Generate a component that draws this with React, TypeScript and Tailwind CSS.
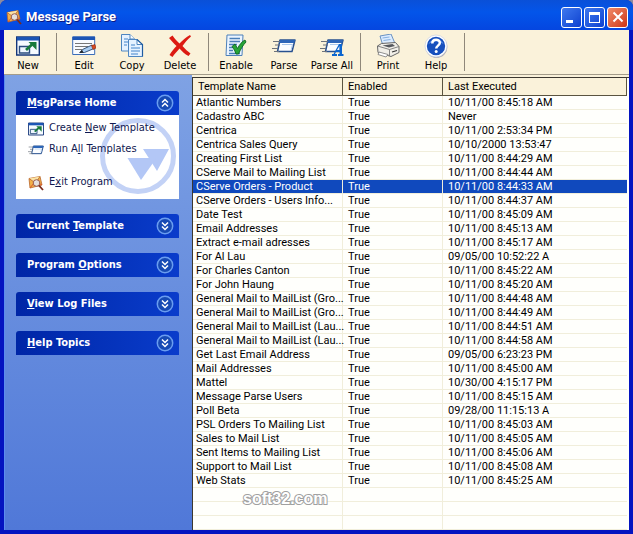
import { useState } from "react";
import type { ReactNode } from "react";

type Row = [name: string, executed: string];

const ROWS: Row[] = [
    ["Atlantic Numbers", "10/11/00 8:45:18 AM"],
    ["Cadastro ABC", "Never"],
    ["Centrica", "10/11/00 2:53:34 PM"],
    ["Centrica Sales Query", "10/10/2000 13:53:47"],
    ["Creating First List", "10/11/00 8:44:29 AM"],
    ["CServe Mail to Mailing List", "10/11/00 8:44:44 AM"],
    ["CServe Orders - Product", "10/11/00 8:44:33 AM"],
    ["CServe Orders - Users Info...", "10/11/00 8:44:37 AM"],
    ["Date Test", "10/11/00 8:45:09 AM"],
    ["Email Addresses", "10/11/00 8:45:13 AM"],
    ["Extract e-mail adresses", "10/11/00 8:45:17 AM"],
    ["For Al Lau", "09/05/00 10:52:22 A"],
    ["For Charles Canton", "10/11/00 8:45:22 AM"],
    ["For John Haung", "10/11/00 8:45:20 AM"],
    ["General Mail to MailList (Gro...", "10/11/00 8:44:48 AM"],
    ["General Mail to MailList (Gro...", "10/11/00 8:44:49 AM"],
    ["General Mail to MailList (Lau...", "10/11/00 8:44:51 AM"],
    ["General Mail to MailList (Lau...", "10/11/00 8:44:58 AM"],
    ["Get Last Email Address", "09/05/00 6:23:23 PM"],
    ["Mail Addresses", "10/11/00 8:45:00 AM"],
    ["Mattel", "10/30/00 4:15:17 PM"],
    ["Message Parse Users", "10/11/00 8:45:15 AM"],
    ["Poll Beta", "09/28/00 11:15:13 A"],
    ["PSL Orders To Mailing List", "10/11/00 8:45:03 AM"],
    ["Sales to Mail List", "10/11/00 8:45:05 AM"],
    ["Sent Items to Mailing List", "10/11/00 8:45:06 AM"],
    ["Support to Mail List", "10/11/00 8:45:08 AM"],
    ["Web Stats", "10/11/00 8:45:25 AM"],
];

const EMPTY_ROWS = [0, 1, 2];

function AppIcon({ className }: { className: string }) {
    return (
        <svg viewBox="0 0 16 16" className={className} aria-hidden="true">
            <path d="M1 3.500 12 1.500 14 10 2 13Z" fill="#f2b04a" stroke="#b8642a" strokeWidth=".8" />
            <path d="M1 3.500 7.500 8 12 1.500" fill="#fbe3a4" stroke="#b8642a" strokeWidth=".8" />
            <path d="M2 13 6 8M14 10 8.500 7" stroke="#d8572a" strokeWidth="1" />
            <circle cx="8.500" cy="8" r="3.300" fill="#e4ecf8" fillOpacity=".85" stroke="#9a5a50" />
            <path d="m11 10.500 4 4.500" stroke="#7a2a1a" strokeWidth="1.800" />
        </svg>
    );
}

function NewIcon({ className }: { className: string }) {
    return (
        <svg viewBox="0 0 24 20" className={className} aria-hidden="true">
            <path d="M.7 1h22.600v18H.7z" fill="#f6fbff" stroke="#15377a" strokeWidth="1.400" />
            <path d="M1 1h22v3.500H1z" fill="#1c55b5" />
            <path d="M3.500 10.500h10v6.500h-10z" fill="#eef6ff" stroke="#2a4c7e" strokeWidth="1.400" />
            <path d="m10 14 6-5.500" stroke="#177a3a" strokeWidth="2.800" />
            <path d="M12.500 6h8v8z" fill="#177a3a" />
        </svg>
    );
}

function EditIcon() {
    return (
        <svg viewBox="0 0 24 24" className="size-6" aria-hidden="true">
            <path d="M.7 3h22v17.500H.7z" fill="#f8fbff" stroke="#3a6db8" strokeWidth="1" />
            <path d="M.5 2.500h22.500V6H.5z" fill="#1c55b5" />
            <path d="M3 9.500h17M3 12.500h13M3 15.500h7" stroke="#777" strokeWidth="1" />
            <path d="m8 18.500 2.500-3L20 11l2 3.500-9.500 4Z" fill="#a9cdf2" stroke="#27466e" strokeWidth=".9" />
            <path d="m19.500 11.500 3.500-1 1 3.500-3 1.500Z" fill="#d84a20" stroke="#8a2810" strokeWidth=".6" />
            <path d="m7 19 3-3 1.500 2.500Z" fill="#222" />
        </svg>
    );
}

function CopyIcon() {
    return (
        <svg viewBox="0 0 24 24" className="size-6" aria-hidden="true">
            <g fill="#e6f2ff" stroke="#4f86c0" strokeWidth="1">
                <path d="M1.500.5H10l4.500 4.500v12h-13z" />
                <path d="M10 .5V5h4.500" fill="#fff" />
                <path d="M8.500 5.500h8.500l5.500 5v12h-14z" />
                <path d="M17 5.500v5h5.500" fill="#fff" />
            </g>
            <path d="M4 5h4M4 8h4M4 11h3M11 11h4M11 14h9M11 17h9M11 20h7" stroke="#79a9dd" strokeWidth="1.300" />
            <path d="m17 5.500 5.500 5v12" fill="none" stroke="#1e5ba0" strokeWidth="1.200" />
        </svg>
    );
}

function DeleteIcon() {
    return (
        <svg viewBox="0 0 24 24" className="size-6" aria-hidden="true">
            <path
                d="M1 4 4.500 1.500C7 5 9 7 11.500 9.500 15 6 18 3 22 1l1 1.500C19.500 5.500 17 8.500 14.500 12c3 3.500 5 5 8 7.500L20.500 22c-4-2-6-4.500-9-7.500C9 17.500 6.500 20 4.500 23L1.500 21C3.500 17.500 6 14.500 8.500 12 5.500 9 3.500 7 1 4Z"
                fill="#dc1a12"
            />
        </svg>
    );
}

function EnableIcon() {
    return (
        <svg viewBox="0 0 24 24" className="size-6" aria-hidden="true">
            <path d="M3 1h16l-1 20.500H2Z" fill="#eaf4ff" stroke="#4d80b9" strokeWidth="1" />
            <path d="M5.500 4.500H16M5.500 7.500H16M5 10.500h8M5 13.500h4M5 16.500h4M5 19.500h11" stroke="#4b7fb8" strokeWidth="1.500" />
            <path d="m8 12.500 3-2.500 2.500 4.500C15.500 10.500 18 7.500 21 6l1 2c-3 3-5.500 7.500-7.500 12h-2.500C11 17 10 15 8 12.500Z" fill="#27a537" stroke="#0a6420" strokeWidth=".9" />
        </svg>
    );
}

function ParseIcon({ className, all }: { className: string; all?: boolean }) {
    return (
        <svg viewBox="0 0 24 24" className={className} aria-hidden="true">
            <path d="M8 6h15l-3 11.500H5.500Z" fill="#fbfdff" stroke="#27508f" strokeWidth="1.500" strokeLinejoin="round" />
            <path d="M8 6h15l-.8 3H7.200Z" fill="#2d66b8" />
            <path d="M10 10.500h10.500l-1.300 5" fill="none" stroke="#aac8ec" strokeWidth="1" />
            <path d="M1 7.500h7M3 11h5M0 14.500h6M2 17.500h5" stroke="#6d737c" strokeWidth="1" />
            {all && (
                <path d="M12 22v-2h1.500L19 10h3v10h1.500v2H18v-2h1.500v-2h-3.500l-1 2H17v2Zm5-6h2.500v-4Z" fill="#0c66cf" />
            )}
        </svg>
    );
}

function PrintIcon() {
    return (
        <svg viewBox="0 0 24 24" className="size-6" aria-hidden="true">
            <path d="m4 2 11-2 4 9.500L7 12Z" fill="#dcecff" stroke="#5a87bc" strokeWidth=".9" />
            <path d="m6.500 4 7-1M7.500 6.500l7-1" stroke="#86b0e0" strokeWidth="1" />
            <path d="m1.500 12 4-2.500 14-1 3.500 4v6L15 22.500 2 18.500Z" fill="#f1efe8" stroke="#666" strokeWidth="1" />
            <path d="m1.500 12 12 3.500L23 12.500M13.500 15.500V22" fill="none" stroke="#777" strokeWidth=".9" />
            <path d="m6.500 11.500 10-1.500 2.500 2-6 1.500Z" fill="#55585e" />
            <path d="m3 18 9 2.500-2 2.500-8-2.500Z" fill="#fff" stroke="#777" strokeWidth=".8" />
            <path d="m16 18 5-1.500" stroke="#333" strokeWidth="1.300" />
        </svg>
    );
}

function HelpIcon() {
    return (
        <svg viewBox="0 0 24 24" className="size-6" aria-hidden="true">
            <circle cx="12.500" cy="13" r="10.800" fill="#a9a9b2" />
            <circle cx="12" cy="12" r="11" fill="#fff" stroke="#bfc6d8" strokeWidth=".6" />
            <circle cx="12" cy="12" r="9.200" fill="#1750bd" />
            <path d="M4.500 10a8 7 0 0 1 15 0 12 12 0 0 0-15 0Z" fill="#5c92ec" />
            <path d="M8.300 9.500C8.300 4.500 16 4.700 15.800 9c-.1 2.500-3.600 2.800-3.600 5.500" fill="none" stroke="#fff" strokeWidth="2.500" />
            <circle cx="12.200" cy="17.500" r="1.500" fill="#fff" />
        </svg>
    );
}

function Chevrons({ up }: { up?: boolean }) {
    return (
        <svg viewBox="0 0 18 18" className="size-[18px]" aria-hidden="true">
            <circle cx="9" cy="9" r="7.700" fill="#174ab4" stroke="#6a9df0" strokeWidth="1.500" />
            <path
                d={up ? "M6 8.500 9 5.500l3 3M6 12.500l3-3 3 3" : "m6 5.500 3 3 3-3M6 9.500l3 3 3-3"}
                fill="none"
                stroke="#fff"
                strokeWidth="1.500"
            />
        </svg>
    );
}

function ToolButton({ label, children }: { label: string; children: ReactNode }) {
    return (
        <button className="flex w-12 flex-col items-center gap-px whitespace-nowrap pt-1 text-[11px] leading-[14px]">
            <span className="flex h-6 shrink-0 items-center">{children}</span>
            {label}
        </button>
    );
}

function Separator() {
    return (
        <div className="flex w-2 justify-center py-[3px]">
            <div className="w-px bg-[#8f887a]" />
        </div>
    );
}

function PanelHeader({ children, up }: { children: ReactNode; up?: boolean }) {
    return (
        <button className="flex h-6 w-full items-center justify-between rounded-t-[3px] bg-linear-to-r from-[#0026a6] to-[#0a3ccb] pr-[5px] pl-[11px] text-[11px] font-bold text-white">
            <span>{children}</span>
            <Chevrons up={up} />
        </button>
    );
}

function PanelLink({ icon, children }: { icon: ReactNode; children: ReactNode }) {
    return (
        <a href="#" className="flex h-[21px] items-center gap-[5px] text-[11px] text-[#101850]">
            {icon}
            <span>{children}</span>
        </a>
    );
}

function Sidebar() {
    return (
        <aside className="flex w-[188px] shrink-0 flex-col gap-[15px] border-l border-[#5b8df0] bg-linear-to-b from-[#7fa2e4] to-[#5078d8] pt-4 pr-[13px] pl-[11px]">
            <section>
                <PanelHeader up>
                    <u>M</u>sgParse Home
                </PanelHeader>
                <div className="relative h-[84px] bg-white pt-[3px] pl-3">
                    <svg viewBox="0 0 78 78" className="absolute top-[2px] right-[2px] size-[78px]" aria-hidden="true">
                        <circle cx="39" cy="39" r="35.500" fill="none" stroke="#c3d2f6" strokeWidth="5" />
                        <path d="M44 32h26L58 54l-5-8Z" fill="#b3c7f6" />
                        <path d="M28.500 41h29L42 63Z" fill="#b3c7f6" />
                    </svg>
                    <nav className="relative flex flex-col">
                        <PanelLink icon={<NewIcon className="h-[14px] w-4" />}>
                            Create <u>N</u>ew Template
                        </PanelLink>
                        <PanelLink icon={<ParseIcon className="size-4" />}>
                            Run A<u>l</u>l Templates
                        </PanelLink>
                        <div className="h-3" />
                        <PanelLink icon={<AppIcon className="size-4" />}>
                            E<u>x</u>it Program
                        </PanelLink>
                    </nav>
                </div>
            </section>
            <PanelHeader>
                Current <u>T</u>emplate
            </PanelHeader>
            <PanelHeader>
                Program <u>O</u>ptions
            </PanelHeader>
            <PanelHeader>
                <u>V</u>iew Log Files
            </PanelHeader>
            <PanelHeader>
                <u>H</u>elp Topics
            </PanelHeader>
        </aside>
    );
}

function TemplateTable() {
    const [selected, setSelected] = useState(6);

    return (
        <div className="relative min-w-0 flex-1 border-t border-l border-[#3c3830] bg-[#fffffc] pr-[2px]">
            <table className="w-full table-fixed border-separate border-spacing-0 text-left font-['Roboto',sans-serif] text-[11px] leading-[13px]">
                <colgroup>
                    <col className="w-[150px]" />
                    <col className="w-[100px]" />
                    <col />
                </colgroup>
                <thead>
                    <tr className="h-[18px] bg-[#faf2da]">
                        {["Template Name", "Enabled", "Last Executed"].map((h) => (
                            <th
                                key={h}
                                className="border-r border-b border-[#5a5440] py-0 pl-[5px] font-normal"
                            >
                                {h}
                            </th>
                        ))}
                    </tr>
                </thead>
                <tbody>
                    {ROWS.map(([name, executed], i) => (
                        <tr
                            key={i}
                            onClick={() => setSelected(i)}
                            className={i === selected ? "h-[14px] bg-[#1049bd] text-white" : "h-[14px]"}
                        >
                            <td className="border-r border-b border-[#f1eedb] py-0 pl-[3px] whitespace-nowrap">
                                {name}
                            </td>
                            <td className="border-r border-b border-[#f1eedb] py-0 pl-[5px]">True</td>
                            <td className="border-b border-[#f1eedb] py-0 pl-[5px] whitespace-nowrap">{executed}</td>
                        </tr>
                    ))}
                    {EMPTY_ROWS.map((i) => (
                        <tr key={`empty-${i}`} className="h-[14px]">
                            <td className="border-r border-b border-[#f1eedb] p-0" />
                            <td className="border-r border-b border-[#f1eedb] p-0" />
                            <td className="border-b border-[#f1eedb] p-0" />
                        </tr>
                    ))}
                </tbody>
            </table>
            <span className="absolute bottom-[21px] left-[50px] font-['Liberation_Sans',sans-serif] text-[16px] leading-5 font-bold text-white [-webkit-text-stroke:2px_#a0a0a0] [paint-order:stroke_fill]">
                soft32.com
            </span>
        </div>
    );
}

export default function App() {
    return (
        <div className="h-screen overflow-hidden bg-[#8b8ba0] font-['DejaVu_Sans_Condensed','DejaVu_Sans',sans-serif] text-black">
            <div className="flex h-full flex-col rounded-t-[7px] bg-[#0414c0]">
                <header className="flex h-[30px] shrink-0 items-center rounded-t-[7px] bg-linear-to-b from-[#0a50d8] via-[#0355ea] via-40% to-[#0546e0] pt-1 pr-[5px] pl-[6px]">
                    <AppIcon className="size-4" />
                    <h1 className="ml-1 flex-1 font-['Roboto',sans-serif] text-[13px] font-bold text-white [text-shadow:1px_1px_0_#0a1883]">
                        Message Parse
                    </h1>
                    <div className="flex gap-[2px]">
                        <button
                            aria-label="Minimize"
                            className="flex size-[21px] items-end rounded-[3px] border border-white bg-linear-to-br from-[#3f78ee] to-[#0f3fd0] pb-1 pl-1"
                        >
                            <span className="h-[3px] w-[7px] bg-white" />
                        </button>
                        <button
                            aria-label="Maximize"
                            className="flex size-[21px] items-center justify-center rounded-[3px] border border-white bg-linear-to-br from-[#3f78ee] to-[#0f3fd0]"
                        >
                            <span className="size-[11px] border border-t-[3px] border-white" />
                        </button>
                        <button
                            aria-label="Close"
                            className="flex size-[21px] items-center justify-center rounded-[3px] border border-white bg-linear-to-br from-[#f08a68] to-[#cc3110]"
                        >
                            <svg viewBox="0 0 12 12" className="size-3" aria-hidden="true">
                                <path d="m1.500 1.500 9 9m0-9-9 9" stroke="#fff" strokeWidth="2" />
                            </svg>
                        </button>
                    </div>
                </header>

                <div className="flex min-h-0 flex-1 flex-col border-x-4 border-b-4 border-[#0414c0] bg-[#faf2da]">
                    <div className="flex h-[45px] shrink-0 border-b border-[#a39c8a]">
                        <ToolButton label="New">
                            <NewIcon className="h-5 w-6" />
                        </ToolButton>
                        <Separator />
                        <ToolButton label="Edit">
                            <EditIcon />
                        </ToolButton>
                        <ToolButton label="Copy">
                            <CopyIcon />
                        </ToolButton>
                        <ToolButton label="Delete">
                            <DeleteIcon />
                        </ToolButton>
                        <Separator />
                        <ToolButton label="Enable">
                            <EnableIcon />
                        </ToolButton>
                        <ToolButton label="Parse">
                            <ParseIcon className="size-6" />
                        </ToolButton>
                        <ToolButton label="Parse All">
                            <ParseIcon className="size-6" all />
                        </ToolButton>
                        <Separator />
                        <ToolButton label="Print">
                            <PrintIcon />
                        </ToolButton>
                        <ToolButton label="Help">
                            <HelpIcon />
                        </ToolButton>
                        <Separator />
                    </div>
                    <main className="flex min-h-0 flex-1">
                        <Sidebar />
                        <div className="flex min-w-0 flex-1 flex-col pt-[2px]">
                            <TemplateTable />
                        </div>
                    </main>
                </div>
            </div>
        </div>
    );
}
